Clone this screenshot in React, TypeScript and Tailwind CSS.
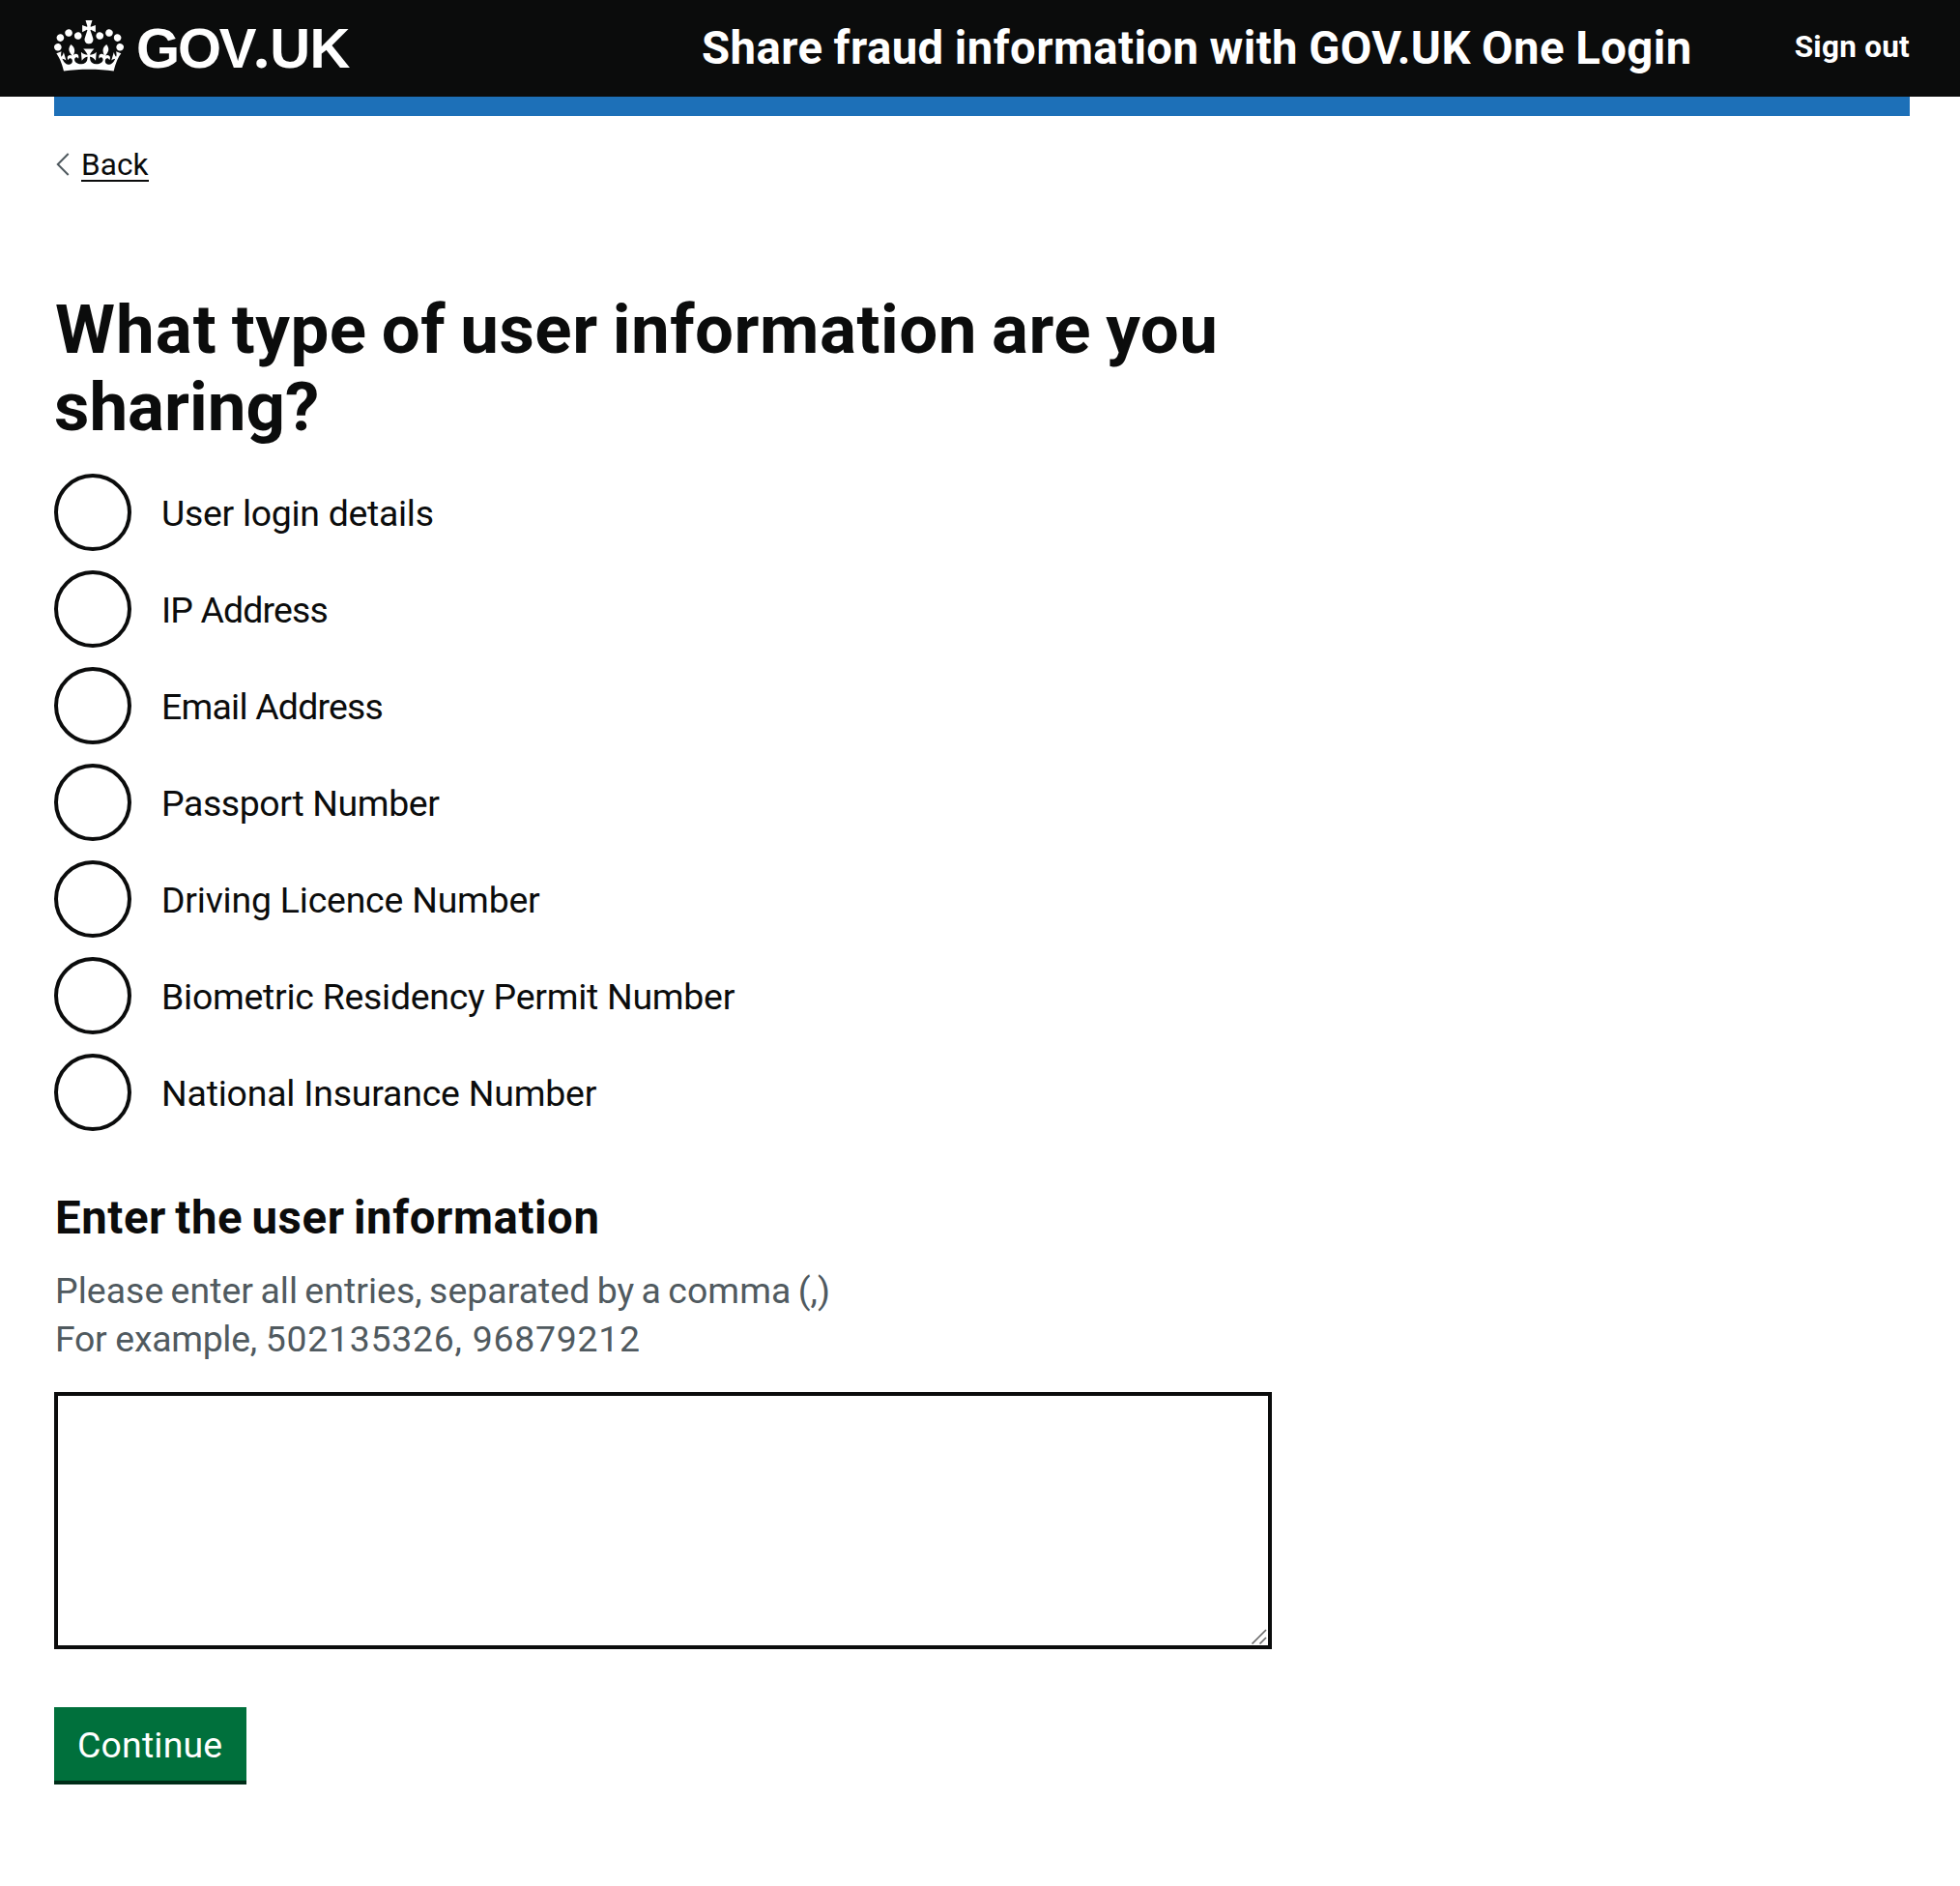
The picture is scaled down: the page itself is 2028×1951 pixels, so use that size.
import { useState } from "react";

const options = [
  { label: "User login details", spacing: "tracking-[-0.28px]" },
  { label: "IP Address", spacing: "tracking-[-0.83px]" },
  { label: "Email Address", spacing: "tracking-[-0.77px]" },
  { label: "Passport Number", spacing: "tracking-[-0.39px]" },
  { label: "Driving Licence Number", spacing: "tracking-[-0.2px]" },
  { label: "Biometric Residency Permit Number", spacing: "tracking-[-0.25px]" },
  { label: "National Insurance Number", spacing: "tracking-[-0.19px]" },
];

function Crown() {
  return (
    <svg viewBox="0 0 132 97" className="mt-[21px] h-[53px] w-[72px] shrink-0" fill="currentColor" aria-hidden="true">
      <path
        fillRule="evenodd"
        d="M25 30.2c3.5 1.5 7.7-.2 9.1-3.7 1.5-3.6-.2-7.8-3.9-9.2-3.6-1.4-7.6.3-9.1 3.9-1.4 3.5.3 7.5 3.9 9zM9 39.5c3.6 1.5 7.8-.2 9.2-3.7 1.5-3.6-.2-7.8-3.9-9.1-3.6-1.5-7.6.2-9.1 3.8-1.4 3.5.3 7.5 3.8 9zM4.4 57.2c3.5 1.5 7.7-.2 9.1-3.8 1.5-3.6-.2-7.7-3.9-9.1-3.5-1.5-7.6.3-9.1 3.8-1.4 3.5.3 7.6 3.9 9.1zm38.3-21.4c3.5 1.5 7.7-.2 9.1-3.8 1.5-3.6-.2-7.7-3.9-9.1-3.6-1.5-7.6.3-9.1 3.8-1.3 3.6.4 7.7 3.9 9.1zm64.4-5.6c-3.6 1.5-7.8-.2-9.1-3.7-1.5-3.6.2-7.8 3.8-9.2 3.6-1.4 7.7.3 9.2 3.9 1.3 3.5-.4 7.5-3.9 9zm15.9 9.3c-3.6 1.5-7.7-.2-9.1-3.7-1.5-3.6.2-7.8 3.7-9.1 3.6-1.5 7.7.2 9.2 3.8 1.5 3.5-.3 7.5-3.8 9zm4.7 17.7c-3.6 1.5-7.8-.2-9.2-3.8-1.5-3.6.2-7.7 3.9-9.1 3.6-1.5 7.7.3 9.2 3.8 1.3 3.5-.4 7.6-3.9 9.1zM89.3 35.8c-3.6 1.5-7.8-.2-9.2-3.8-1.4-3.6.2-7.7 3.9-9.1 3.6-1.5 7.7.3 9.2 3.8 1.4 3.6-.3 7.7-3.9 9.1zM69.7 17.7l8.9 4.7V9.3l-8.9 2.8c-.2-.3-.5-.6-.9-.9L72.4 0H59.6l3.5 11.2c-.3.3-.6.5-.9.9l-8.8-2.8v13.1l8.8-4.7c.3.3.6.7.9.9l-5 15.4v.1c-.2.8-.4 1.6-.4 2.4 0 4.1 3.1 7.5 7 8.1h.2c.3 0 .7.1 1 .1.4 0 .7 0 1-.1h.2c4-.6 7.1-4.1 7.1-8.1 0-.8-.1-1.7-.4-2.4V34l-5.1-15.4c.4-.2.7-.6 1-.9zM66 92.8c16.9 0 32.8 1.1 47.1 3.2 4-16.9 8.9-26.7 14-33.5l-9.6-3.4c1 4.9 1.1 7.2 0 10.2-1.5-1.4-3-4.3-4.2-8.7L108.6 76c2.8-2 5-3.2 7.5-3.3-4.4 9.4-10 11.9-13.6 11.2-4.3-.8-6.3-4.6-5.6-7.9 1-4.7 5.7-5.9 8-.5 4.3-8.7-3-11.4-7.6-8.8 7.1-7.2 7.9-13.5 2.1-21.1-8 6.1-8.1 12.3-4.5 20.8-4.7-5.4-12.1-2.5-9.5 6.2 3.4-5.2 7.9-2 7.2 3.1-.6 4.3-6.4 7.8-13.5 7.2-10.3-.9-10.9-8-11.2-13.8 2.5-.5 7.1 1.8 11 7.3L80.2 60c-4.1 4.4-8 5.3-12.3 5.4 1.4-4.4 8-11.6 8-11.6H55.5s6.4 7.2 7.9 11.6c-4.2-.1-8-1-12.3-5.4l1.4 16.4c3.9-5.5 8.5-7.7 10.9-7.3-.3 5.8-.9 12.8-11.1 13.8-7.2.6-12.9-2.9-13.5-7.2-.7-5 3.8-8.3 7.1-3.1 2.7-8.7-4.6-11.6-9.4-6.2 3.7-8.5 3.6-14.7-4.6-20.8-5.8 7.6-5 13.9 2.2 21.1-4.7-2.6-11.9.1-7.7 8.8 2.3-5.5 7.1-4.2 8.1.5.7 3.3-1.3 7.1-5.7 7.9-3.5.7-9-1.8-13.5-11.2 2.5.1 4.7 1.3 7.5 3.3l-4.7-15.4c-1.2 4.4-2.7 7.2-4.3 8.7-1.1-3-.9-5.3 0-10.2l-9.5 3.4c5 6.9 9.9 16.7 14 33.5 14.8-2.1 30.8-3.2 47.7-3.2z"
      />
    </svg>
  );
}

function Header() {
  return (
    <header className="flex h-[100px] items-start justify-between bg-[#0b0c0c] px-[56px] pr-[52px] text-white">
      <div className="flex w-[670px] items-start">
        <Crown />
        <div className="ml-[13px] mt-[20px] flex whitespace-nowrap font-['Liberation_Sans',sans-serif] text-[58px] leading-[60px] font-bold">
          <span className="tracking-[-2.2px]">GOV</span>
          <span className="-ml-[2px] w-[18px] font-['Roboto',sans-serif] text-[66px] leading-[56px]">.</span>
          <span className="tracking-[-0.8px]">UK</span>
        </div>
      </div>
      <div className="flex flex-1 items-start justify-between whitespace-nowrap font-bold">
        <span className="mt-[20px] text-[47.3px] leading-[60px] tracking-[0.42px] [word-spacing:-1px]">
          Share fraud information with GOV.UK One Login
        </span>
        <a href="#" className="mt-[29px] text-[31.5px] leading-[40px] tracking-[0.25px]">
          Sign out
        </a>
      </div>
    </header>
  );
}

export default function App() {
  const [selected, setSelected] = useState("");

  return (
    <div className="min-h-[1951px] bg-white font-['Roboto','Open_Sans',sans-serif] text-[#0b0c0c]">
      <Header />
      <div className="mr-[52px] ml-[56px]">
        <div className="h-5 bg-[#1d70b8]" />

        <a href="#" className="mt-[30px] flex h-[40px] w-max items-start">
          <svg viewBox="0 0 16 26" className="mt-[7px] ml-[2px] h-[26px] w-[16px]" fill="none" stroke="#505a5f" strokeWidth="2" aria-hidden="true">
            <path d="M12.7 2 1.8 13l10.9 11" />
          </svg>
          <span className="ml-[10px] h-[38px] w-[70px] border-b-2 border-[#0b0c0c] text-[31.5px] leading-[42px] tracking-[0.1px]">
            Back
          </span>
        </a>

        <main className="w-[1260px]">
          <form onSubmit={(e) => e.preventDefault()}>
            <h1 className="mt-[111px] text-[70.9px] leading-[80px] font-bold whitespace-nowrap">
              <span className="block pl-px tracking-[0.5px] [word-spacing:-3px]">
                <span className="tracking-[1px]">What</span> type of user information are you
              </span>
              <span className="block">sharing?</span>
            </h1>

            <div className="mt-[29px] flex flex-col gap-5">
              {options.map((o) => (
                <label key={o.label} className="flex h-[80px] items-center">
                  <input
                    type="radio"
                    name="information-type"
                    checked={selected === o.label}
                    onChange={() => setSelected(o.label)}
                    className="size-[80px] shrink-0 appearance-none rounded-full border-4 border-[#0b0c0c] bg-white checked:bg-[#0b0c0c] checked:shadow-[inset_0_0_0_14px_white]"
                  />
                  <span className={`mt-px ml-[31px] text-[37.4px] leading-[50px] ${o.spacing}`}>{o.label}</span>
                </label>
              ))}
            </div>

            <h2 className="mt-[60px] pl-px text-[47.3px] leading-[60px] font-bold tracking-[0.6px] [word-spacing:-3px]">
              Enter the user information
            </h2>
            <div className="mt-[20px] pl-px text-[37.4px] leading-[50px] text-[#505a5f]">
              <p className="tracking-[0.05px] [word-spacing:-2px]">Please enter all entries, separated by a comma (,)</p>
              <p className="tracking-[0.75px]">
                <span className="tracking-[-0.3px]">For example, </span>502135326, 96879212
              </p>
            </div>

            <div className="relative mt-[30px] h-[266px]">
              <textarea
                aria-label="User information"
                className="block h-[266px] w-full resize-none border-4 border-[#0b0c0c] p-[10px] text-[37.4px] leading-[50px] outline-none"
              />
              <svg viewBox="0 0 18 18" className="absolute right-[5px] bottom-[4px] size-[18px]" fill="none" stroke="#6b6b6b" strokeWidth="1.7" aria-hidden="true">
                <path d="M2.5 16.5 17 2M10.5 16.5 17 10" />
              </svg>
            </div>

            <button
              type="submit"
              className="mt-[60px] flex h-[80px] w-[199px] items-start border-b-4 border-[#002d18] bg-[#00703c] pt-[14px] pl-[24px] text-[37.4px] leading-[50px] tracking-[0.2px] text-white"
            >
              Continue
            </button>
          </form>
        </main>
      </div>
    </div>
  );
}
